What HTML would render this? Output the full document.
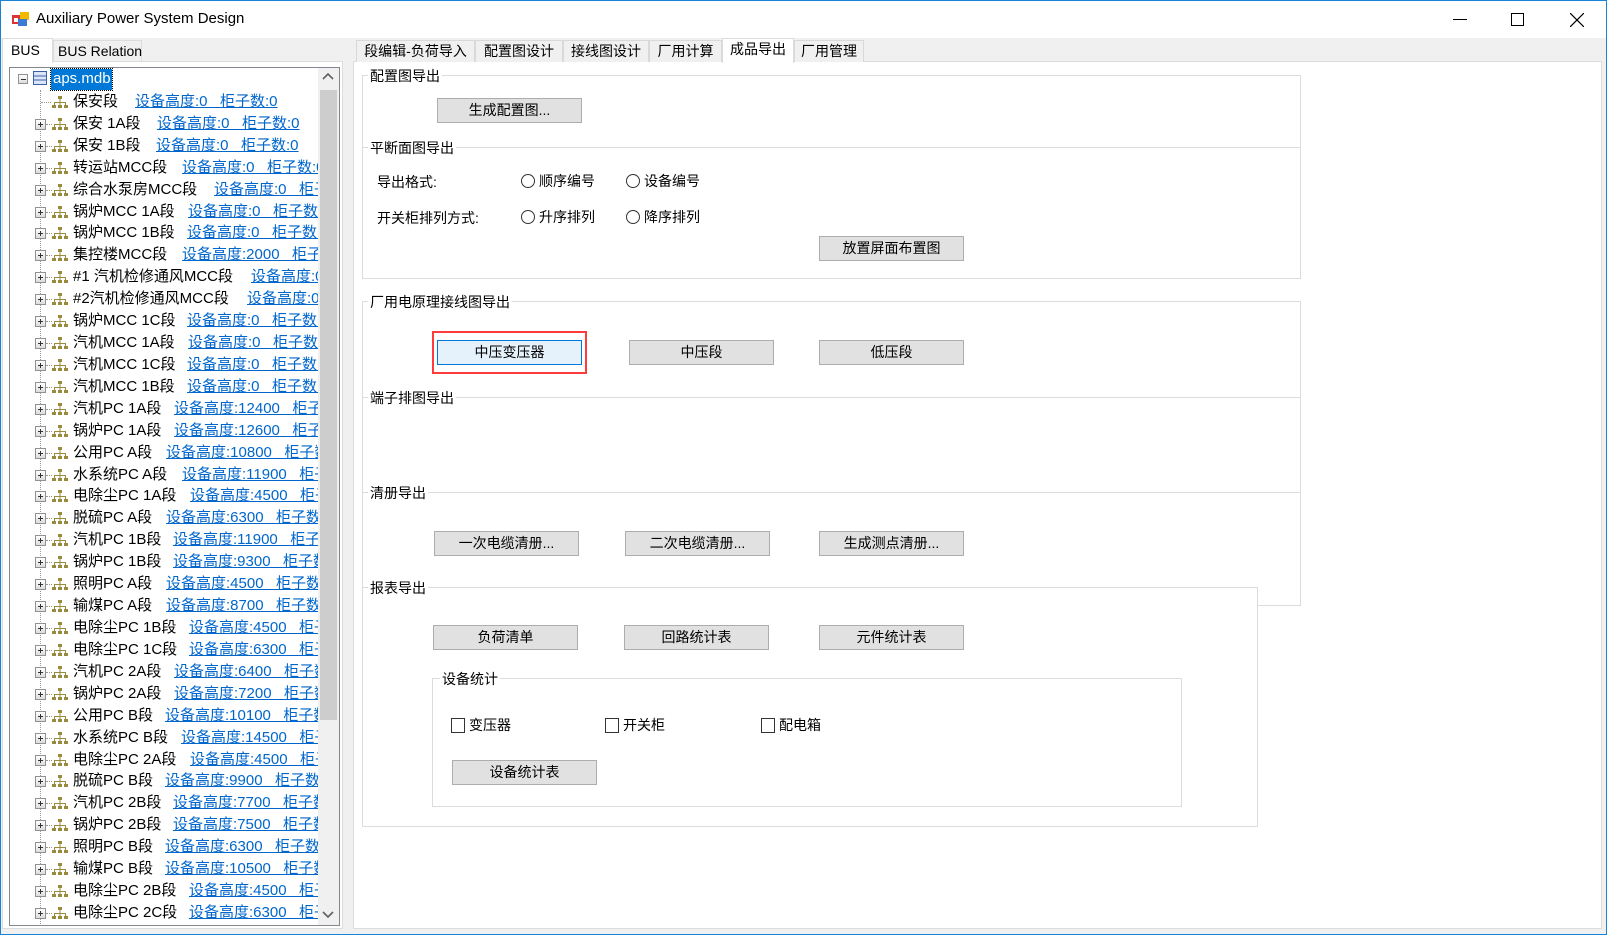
<!DOCTYPE html>
<html><head><meta charset="utf-8"><style>
*{box-sizing:border-box;margin:0;padding:0}
body{width:1607px;height:935px;position:relative;overflow:hidden;background:#f0f0f0;font-family:"Liberation Sans","Noto Sans CJK SC",sans-serif;font-size:14px;color:#000}
.a{position:absolute}
#win{left:0;top:0;width:1607px;height:935px;border:1px solid #1883d7}
#title{left:1px;top:1px;width:1605px;height:37px;background:#fff}
.btn{position:absolute;background:#e1e1e1;border:1px solid #adadad;text-align:center;font-size:14px;line-height:22px;height:25px}
.grp{position:absolute;border:1px solid #dcdcdc;background:#fff}
.gl{position:absolute;background:#fff;font-size:14px;padding:0 2px;line-height:18px;left:-2px;top:-9px}
.row{position:absolute;height:22px;line-height:22px;white-space:pre;font-size:15px;left:0}
.ex{position:absolute;width:11px;height:11px;border:1px solid #919191;background:linear-gradient(#fff,#dcdcdc);left:25px;top:6px}
.ex:before{content:"";position:absolute;left:2px;top:4px;width:5px;height:1px;background:#333}
.ex:after{content:"";position:absolute;left:4px;top:2px;width:1px;height:5px;background:#333}
.hl{position:absolute;left:25px;top:11px;width:6px;border-top:1px dotted #999}
.ic{position:absolute;left:42px;top:4px}
.tx{position:absolute;left:63px;top:0}
.lk{position:absolute;color:#0066cc;text-decoration:underline;top:0}
.tab{position:absolute;height:22px;top:40px;border:1px solid #d9d9d9;border-bottom:none;background:#f0f0f0;font-size:14px;line-height:20px;text-align:center;white-space:nowrap}
.rad{position:absolute;width:14px;height:14px;border:1px solid #333;border-radius:50%;background:#fff}
.chk{position:absolute;width:14px;height:15px;border:1px solid #333;background:#fff}
</style></head><body>
<div id="win" class="a"></div>
<div id="title" class="a">
<svg class="a" style="left:11px;top:10px" width="18" height="16"><rect x="0" y="4" width="8" height="9" fill="#d33"/><rect x="8" y="1" width="9" height="8" fill="#f2b800"/><rect x="6" y="8" width="9" height="7" fill="#3a7bd5"/><rect x="2" y="7" width="4" height="4" fill="#fff"/></svg>
<div class="a" style="left:35px;top:9px;font-size:15px">Auxiliary Power System Design</div>
<div class="a" style="left:1452px;top:18px;width:14px;height:1px;background:#000"></div>
<div class="a" style="left:1510px;top:12px;width:13px;height:13px;border:1px solid #000"></div>
<svg class="a" style="left:1569px;top:12px" width="14" height="14"><path d="M0 0L14 14M14 0L0 14" stroke="#000" stroke-width="1.2"/></svg>
</div>

<div class="a" style="left:2px;top:61px;width:341px;height:868px;background:#fff;border:1px solid #dcdcdc"></div>
<div class="a" style="left:2px;top:38px;width:51px;height:25px;background:#fff;border:1px solid #dcdcdc;border-bottom:none;font-size:14px;padding:3px 0 0 8px">BUS</div>
<div class="a" style="left:53px;top:40px;width:89px;height:21px;background:#f0f0f0;border:1px solid #dcdcdc;border-bottom:none;font-size:14px;padding:2px 0 0 4px;white-space:nowrap">BUS Relation</div>
<div class="a" style="left:9px;top:67px;width:331px;height:859px;border:1px solid #828790;background:#fff"></div>
<div class="a" style="left:318px;top:68px;width:21px;height:857px;background:#f0f0f0"></div>
<div class="a" style="left:320px;top:90px;width:17px;height:630px;background:#cdcdcd"></div>
<svg class="a" style="left:322px;top:72px" width="12" height="10"><path d="M1 7L6 2L11 7" stroke="#606060" stroke-width="1.6" fill="none"/></svg>
<svg class="a" style="left:322px;top:910px" width="12" height="10"><path d="M1 2L6 7L11 2" stroke="#606060" stroke-width="1.6" fill="none"/></svg>

<div class="a" style="left:10px;top:68px;width:308px;height:857px;overflow:hidden">
<div class="a" style="left:30px;top:22px;height:840px;border-left:1px dotted #999"></div>
<div class="a" style="left:8px;top:6px;width:10px;height:10px;border:1px solid #919191;background:linear-gradient(#fff,#dcdcdc)"><div class="a" style="left:2px;top:4px;width:5px;height:1px;background:#333"></div></div>
<svg class="a" style="left:23px;top:3px" width="14" height="14"><rect x="0.5" y="0.5" width="13" height="13" fill="#dbe6f7" stroke="#3b5fa8"/><path d="M1 5H13M1 9H13" stroke="#3b5fa8"/></svg>
<div class="a" style="left:41px;top:1px;width:61px;height:21px;background:#0078d7;color:#fff;font-size:15px;line-height:20px;padding-left:2px;outline:1px dotted #000">aps.mdb</div>
<div id="rows"></div>
</div>

<div class="a" style="left:353px;top:61px;width:1249px;height:868px;background:#fff;border:1px solid #dcdcdc"></div>
<div class="tab" style="left:356px;width:119px">段编辑-负荷导入</div>
<div class="tab" style="left:475px;width:88px">配置图设计</div>
<div class="tab" style="left:563px;width:86px">接线图设计</div>
<div class="tab" style="left:649px;width:73px">厂用计算</div>
<div class="tab" style="left:722px;width:72px;top:38px;height:25px;background:#fff;border-color:#dcdcdc">成品导出</div>
<div class="tab" style="left:794px;width:70px">厂用管理</div>

<div class="grp" style="left:362px;top:75px;width:939px;height:80px"><div class="gl" style="left:5px">配置图导出</div></div>
<div class="btn" style="left:437px;top:98px;width:145px">生成配置图...</div>
<div class="grp" style="left:362px;top:147px;width:939px;height:132px"><div class="gl" style="left:5px">平断面图导出</div>
<div class="a" style="left:14px;top:24px">导出格式:</div>
<div class="a" style="left:14px;top:60px">开关柜排列方式:</div>
</div>
<div class="rad" style="left:521px;top:174px"></div><div class="a" style="left:539px;top:171px">顺序编号</div>
<div class="rad" style="left:626px;top:174px"></div><div class="a" style="left:644px;top:171px">设备编号</div>
<div class="rad" style="left:521px;top:210px"></div><div class="a" style="left:539px;top:207px">升序排列</div>
<div class="rad" style="left:626px;top:210px"></div><div class="a" style="left:644px;top:207px">降序排列</div>
<div class="btn" style="left:819px;top:236px;width:145px">放置屏面布置图</div>

<div class="grp" style="left:362px;top:301px;width:939px;height:110px"><div class="gl" style="left:5px">厂用电原理接线图导出</div></div>
<div class="a" style="left:432px;top:331px;width:155px;height:43px;border:2px solid #ff3b3b"></div>
<div class="btn" style="left:437px;top:340px;width:145px;background:#e5f1fb;border-color:#0078d7">中压变压器</div>
<div class="btn" style="left:629px;top:340px;width:145px">中压段</div>
<div class="btn" style="left:819px;top:340px;width:145px">低压段</div>

<div class="grp" style="left:362px;top:397px;width:939px;height:110px"><div class="gl" style="left:5px">端子排图导出</div></div>
<div class="grp" style="left:362px;top:492px;width:939px;height:114px"><div class="gl" style="left:5px">清册导出</div></div>
<div class="btn" style="left:434px;top:531px;width:145px">一次电缆清册...</div>
<div class="btn" style="left:625px;top:531px;width:145px">二次电缆清册...</div>
<div class="btn" style="left:819px;top:531px;width:145px">生成测点清册...</div>

<div class="grp" style="left:362px;top:587px;width:896px;height:240px"><div class="gl" style="left:5px">报表导出</div></div>
<div class="btn" style="left:433px;top:625px;width:145px">负荷清单</div>
<div class="btn" style="left:624px;top:625px;width:145px">回路统计表</div>
<div class="btn" style="left:819px;top:625px;width:145px">元件统计表</div>
<div class="grp" style="left:432px;top:678px;width:750px;height:129px"><div class="gl" style="left:7px">设备统计</div></div>
<div class="chk" style="left:451px;top:718px"></div><div class="a" style="left:469px;top:715px">变压器</div>
<div class="chk" style="left:605px;top:718px"></div><div class="a" style="left:623px;top:715px">开关柜</div>
<div class="chk" style="left:761px;top:718px"></div><div class="a" style="left:779px;top:715px">配电箱</div>
<div class="btn" style="left:452px;top:760px;width:145px">设备统计表</div>

<script>
var d=[["保安段",135,"0","0"],["保安 1A段",157,"0","0"],["保安 1B段",156,"0","0"],["转运站MCC段",182,"0","0"],["综合水泵房MCC段",214,"0","0"],["锅炉MCC 1A段",188,"0","0"],["锅炉MCC 1B段",187,"0","0"],["集控楼MCC段",182,"2000","0"],["#1 汽机检修通风MCC段",251,"0","0"],["#2汽机检修通风MCC段",247,"0","0"],["锅炉MCC 1C段",187,"0","0"],["汽机MCC 1A段",188,"0","0"],["汽机MCC 1C段",187,"0","0"],["汽机MCC 1B段",187,"0","0"],["汽机PC 1A段",174,"12400","0"],["锅炉PC 1A段",174,"12600","0"],["公用PC A段",166,"10800","0"],["水系统PC A段",182,"11900","0"],["电除尘PC 1A段",190,"4500","0"],["脱硫PC A段",166,"6300","0"],["汽机PC 1B段",173,"11900","0"],["锅炉PC 1B段",173,"9300","0"],["照明PC A段",166,"4500","0"],["输煤PC A段",166,"8700","0"],["电除尘PC 1B段",189,"4500","0"],["电除尘PC 1C段",189,"6300","0"],["汽机PC 2A段",174,"6400","0"],["锅炉PC 2A段",174,"7200","0"],["公用PC B段",165,"10100","0"],["水系统PC B段",181,"14500","0"],["电除尘PC 2A段",190,"4500","0"],["脱硫PC B段",165,"9900","0"],["汽机PC 2B段",173,"7700","0"],["锅炉PC 2B段",173,"7500","0"],["照明PC B段",165,"6300","0"],["输煤PC B段",165,"10500","0"],["电除尘PC 2B段",189,"4500","0"],["电除尘PC 2C段",189,"6300","0"]];
var ic='<svg class="ic" width="16" height="14"><g fill="#9a8a3c"><rect x="6" y="1" width="4" height="3"/><rect x="7.5" y="4" width="1" height="3"/><rect x="2" y="7" width="12" height="1"/><rect x="2" y="8" width="1" height="2"/><rect x="7.5" y="8" width="1" height="2"/><rect x="13" y="8" width="1" height="2"/><rect x="0" y="10" width="4" height="3"/><rect x="6" y="10" width="4" height="3"/><rect x="12" y="10" width="4" height="3"/></g></svg>';
var h='';
for(var i=0;i<d.length;i++){var t=Math.round(80+21.92*(i+1))-11-68;
h+='<div class="row" style="top:'+t+'px;width:400px">'+(i==0?'<div class="hl" style="left:31px;width:10px"></div>':'<div class="hl" style="left:36px;width:6px"></div><div class="ex"></div>')+ic+'<div class="tx">'+d[i][0]+'</div><div class="lk" style="left:'+(d[i][1]-10)+'px">设备高度:'+d[i][2]+'&nbsp;&nbsp;&nbsp;柜子数:'+d[i][3]+'</div></div>';}
document.getElementById('rows').innerHTML=h;
</script>
</body></html>
